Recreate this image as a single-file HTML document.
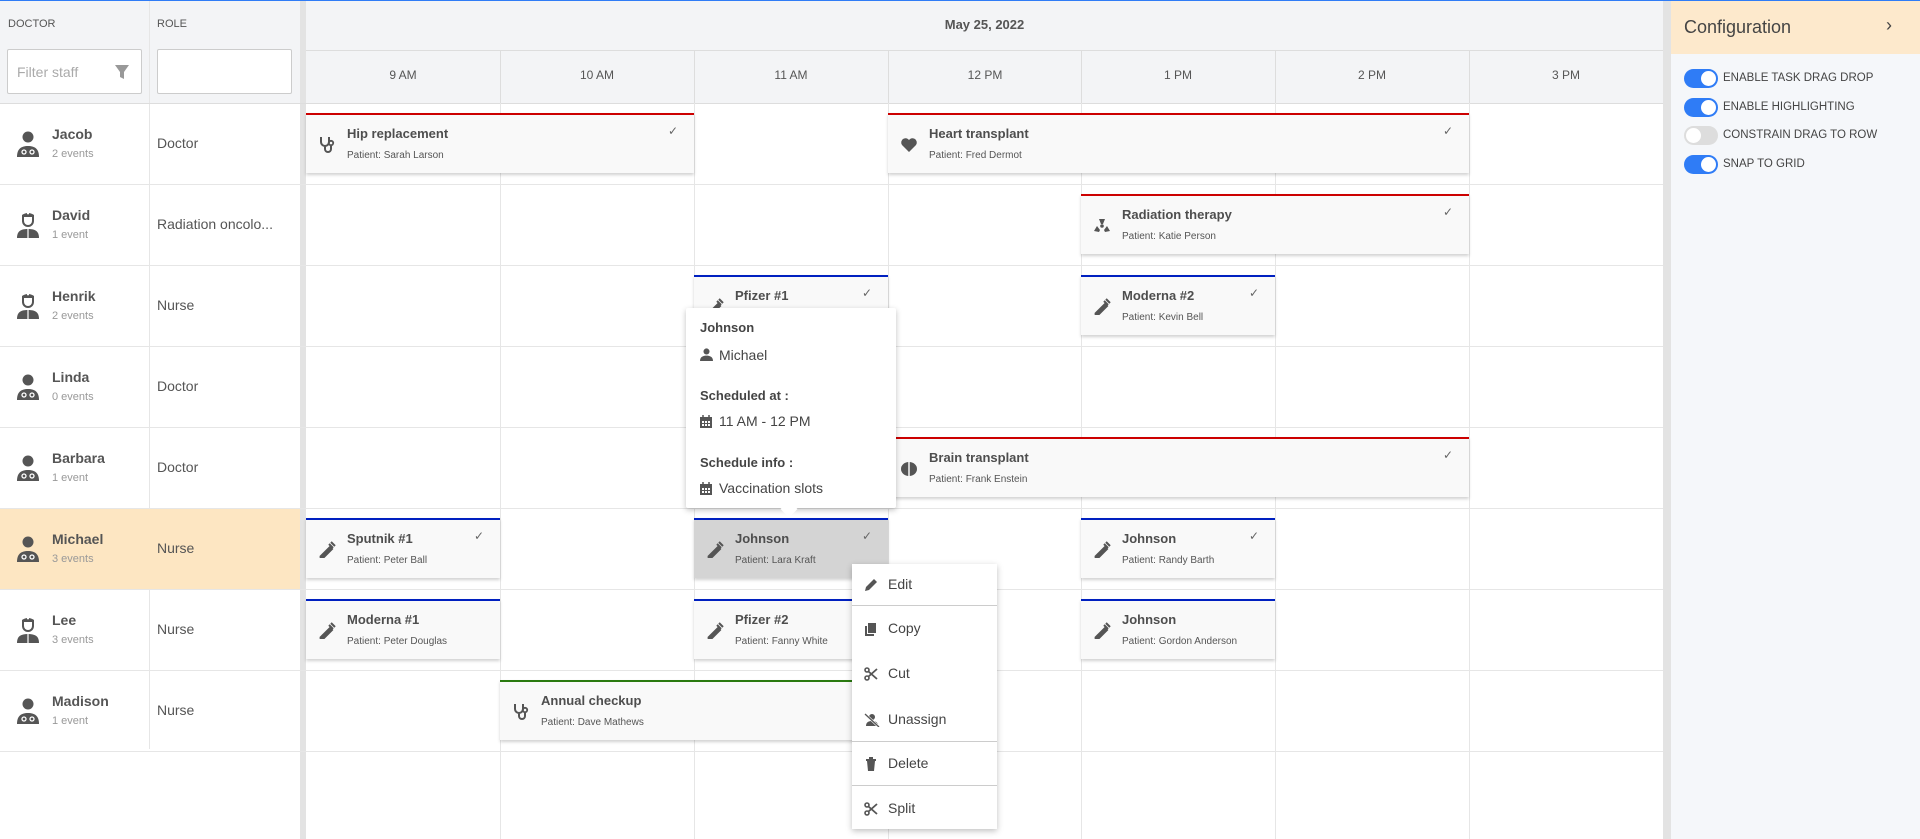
<!DOCTYPE html>
<html><head><meta charset="utf-8"><style>
*{box-sizing:border-box;margin:0;padding:0}
body{width:1920px;height:839px;overflow:hidden;background:#fff;font-family:"Liberation Sans",sans-serif;color:#4a4a4a;position:relative}
.a{position:absolute}
.hd{background:#f3f4f6}
.vl{position:absolute;width:1px;background:#e6e6e6}
.hl{position:absolute;height:1px;background:#e6e6e6}
.name{font-size:14px;font-weight:bold;color:#555}
.cnt{font-size:11px;color:#999}
.ev{position:absolute;height:60px;background:#f9f9f9;box-shadow:0 2px 3px rgba(0,0,0,.18);border-top:2px solid #c00}
.ev .t{position:absolute;left:41px;top:11px;font-size:13px;font-weight:bold;color:#4e4e4e;white-space:nowrap}
.ev .p{position:absolute;left:41px;top:35px;font-size:10px;color:#555;white-space:nowrap}
.ev .ck{position:absolute;right:16px;top:9px;font-size:12px;color:#666}
.ev svg{position:absolute;left:11px;top:20px}
.tg{position:absolute;left:1684px;width:34px;height:19px;border-radius:10px;background:#2f7cf6}
.tg::after{content:"";position:absolute;right:2px;top:2px;width:15px;height:15px;border-radius:50%;background:#fff}
.tg.off{background:#ddd}.tg.off::after{right:auto;left:2px}
.tl{position:absolute;left:1723px;font-size:11.5px;color:#444}
.mi{position:absolute;left:0;width:145px;font-size:14px;color:#444}
.mi svg{position:absolute;left:12px;top:2px}
.mi span{position:absolute;left:36px;top:0}
</style></head><body>
<div class="a" style="left:0;top:0;width:1920px;height:1px;background:#2f7cf6"></div>
<div class="a hd" style="left:0;top:1px;width:300px;height:102px"></div>
<div class="a" style="left:8px;top:18px;font-size:11px;color:#555">DOCTOR</div>
<div class="a" style="left:157px;top:18px;font-size:11px;color:#555">ROLE</div>
<div class="a" style="left:7px;top:49px;width:135px;height:45px;background:#fff;border:1px solid #ccc;border-radius:2px"></div>
<div class="a" style="left:17px;top:64px;font-size:14px;color:#aaa">Filter staff</div>
<svg class="a" style="left:114px;top:64px" width="16" height="16" viewBox="0 0 16 16"><path d="M1 1h14l-5 7v7l-4-2V8z" fill="#999"/></svg>
<div class="a" style="left:157px;top:49px;width:135px;height:45px;background:#fff;border:1px solid #ccc;border-radius:2px"></div>
<div class="vl" style="left:149px;top:1px;height:748px"></div>
<div class="a" style="left:300px;top:1px;width:6px;height:838px;background:#e3e3e3"></div>
<div class="a hd" style="left:306px;top:1px;width:1357px;height:102px"></div>
<div class="a" style="left:306px;top:17px;width:1357px;text-align:center;font-size:13px;font-weight:bold;color:#555">May 25, 2022</div>
<div class="hl" style="left:306px;top:50px;width:1357px;background:#ddd"></div>
<div class="hl" style="left:0;top:103px;width:1663px;background:#ddd"></div>
<div id="times"></div>
<div class="a" style="left:0;top:508px;width:300px;height:81px;background:#fde6c2"></div>
<div id="rows"></div>
<div class="a" style="left:1663px;top:1px;width:8px;height:838px;background:#e3e3e3"></div>
<div class="a" style="left:1671px;top:1px;width:249px;height:838px;background:#f5f7fa"></div>
<div class="a" style="left:1671px;top:1px;width:249px;height:53px;background:#fde9cc"></div>
<div class="a" style="left:1684px;top:17px;font-size:18px;color:#444">Configuration</div>
<div class="a" style="left:1886px;top:15px;font-size:18px;color:#444">›</div>
<div class="tg" style="top:69px"></div><div class="tl" style="top:72px">ENABLE TASK DRAG DROP</div>
<div class="tg" style="top:98px"></div><div class="tl" style="top:101px">ENABLE HIGHLIGHTING</div>
<div class="tg off" style="top:126px"></div><div class="tl" style="top:129px">CONSTRAIN DRAG TO ROW</div>
<div class="tg" style="top:155px"></div><div class="tl" style="top:158px">SNAP TO GRID</div>
<div id="evs"></div>
<div class="a" style="left:686px;top:308px;width:210px;height:200px;background:#fff;box-shadow:0 2px 6px rgba(0,0,0,.25);border-radius:2px"></div>
<div class="a" style="left:783px;top:503px;width:12px;height:12px;background:#fff;transform:rotate(45deg)"></div>
<div class="a" style="left:700px;top:320px;font-size:13px;font-weight:bold;color:#444">Johnson</div>
<svg class="a" style="left:700px;top:348px" width="13" height="13" viewBox="0 0 12 12"><circle cx="6" cy="3.2" r="2.8" fill="#555"/><path d="M0 12c0-4 3-5 6-5s6 1 6 5z" fill="#555"/></svg>
<div class="a" style="left:719px;top:347px;font-size:14px;color:#444">Michael</div>
<div class="a" style="left:700px;top:388px;font-size:13px;font-weight:bold;color:#444">Scheduled at :</div>
<svg class="a" style="left:700px;top:415px" width="12" height="13" viewBox="0 0 12 13"><path d="M0 2h12v11H0z" fill="#555"/><path d="M2 6h2v2H2zM5 6h2v2H5zM8 6h2v2H8zM2 9h2v2H2zM5 9h2v2H5zM8 9h2v2H8z" fill="#fff"/><path d="M3 0v3M9 0v3" stroke="#555" stroke-width="1.5"/></svg>
<div class="a" style="left:719px;top:413px;font-size:14px;color:#444">11 AM - 12 PM</div>
<div class="a" style="left:700px;top:455px;font-size:13px;font-weight:bold;color:#444">Schedule info :</div>
<svg class="a" style="left:700px;top:482px" width="12" height="13" viewBox="0 0 12 13"><path d="M0 2h12v11H0z" fill="#555"/><path d="M2 6h2v2H2zM5 6h2v2H5zM8 6h2v2H8zM2 9h2v2H2zM5 9h2v2H5zM8 9h2v2H8z" fill="#fff"/><path d="M3 0v3M9 0v3" stroke="#555" stroke-width="1.5"/></svg>
<div class="a" style="left:719px;top:480px;font-size:14px;color:#444">Vaccination slots</div>
<div class="a" style="left:852px;top:564px;width:145px;height:265px;background:#fff;box-shadow:0 2px 6px rgba(0,0,0,.25)">
<div class="mi" style="top:12px"><svg width="14" height="14" viewBox="0 0 14 14"><path d="M1 13l1-4 8-8 3 3-8 8z" fill="#555"/></svg><span>Edit</span></div>
<div class="hl" style="left:0;top:41px;width:145px;background:#ccc"></div>
<div class="mi" style="top:56px"><svg width="14" height="14" viewBox="0 0 14 14"><path d="M4 1h8v10H4z" fill="#555"/><path d="M1 4h2v8h7v2H1z" fill="#555"/></svg><span>Copy</span></div>
<div class="mi" style="top:101px"><svg width="14" height="14" viewBox="0 0 14 14"><circle cx="3" cy="3" r="2" fill="none" stroke="#555" stroke-width="1.6"/><circle cx="3" cy="11" r="2" fill="none" stroke="#555" stroke-width="1.6"/><path d="M4.5 4.5L13 12M4.5 9.5L13 2" stroke="#555" stroke-width="1.8"/></svg><span>Cut</span></div>
<div class="mi" style="top:147px"><svg width="16" height="14" viewBox="0 0 16 14"><circle cx="8" cy="4" r="3" fill="#555"/><path d="M2 13c0-4 3-5 6-5s6 1 6 5z" fill="#555"/><path d="M1 1l14 13" stroke="#fff" stroke-width="2.5"/><path d="M1 1l14 13" stroke="#555" stroke-width="1.3"/></svg><span>Unassign</span></div>
<div class="hl" style="left:0;top:177px;width:145px;background:#ccc"></div>
<div class="mi" style="top:191px"><svg width="14" height="14" viewBox="0 0 14 14"><path d="M2 2h10v2H2zM5 0h4v2H5zM3 4h8l-1 10H4z" fill="#555"/></svg><span>Delete</span></div>
<div class="hl" style="left:0;top:221px;width:145px;background:#ccc"></div>
<div class="mi" style="top:236px"><svg width="14" height="14" viewBox="0 0 14 14"><circle cx="3" cy="3" r="2" fill="none" stroke="#555" stroke-width="1.6"/><circle cx="3" cy="11" r="2" fill="none" stroke="#555" stroke-width="1.6"/><path d="M4.5 4.5L13 12M4.5 9.5L13 2" stroke="#555" stroke-width="1.8"/></svg><span>Split</span></div>
</div>
<script>
var cx=[306,500,694,888,1081,1275,1469,1663],labels=["9 AM","10 AM","11 AM","12 PM","1 PM","2 PM","3 PM"];
var h="";
for(var i=0;i<7;i++){h+='<div class="a" style="left:'+cx[i]+'px;top:68px;width:194px;text-align:center;font-size:12px;color:#555">'+labels[i]+'</div>';
 if(i>0)h+='<div class="vl" style="left:'+cx[i]+'px;top:50px;height:53px;background:#ddd"></div>';}
document.getElementById("times").innerHTML=h;
var docI='<svg width="24" height="26" viewBox="0 0 24 26"><circle cx="12" cy="6" r="5.5" fill="#555"/><path d="M1 26c0-8 4-11 11-11s11 3 11 11z" fill="#555"/><circle cx="8" cy="21" r="2" fill="none" stroke="#fff" stroke-width="1.3"/><circle cx="16" cy="21" r="2" fill="none" stroke="#fff" stroke-width="1.3"/></svg>';
var nurI='<svg width="24" height="26" viewBox="0 0 24 26"><path d="M6 3q6-4 12 0v6a6 6 0 0 1-12 0z" fill="#555"/><path d="M8 5h8v4a4 4 0 0 1-8 0z" fill="#fff"/><path d="M11 1.5h2M12 .5v2" stroke="#fff"/><path d="M1 26c0-7 4-9 11-9s11 2 11 9z" fill="#555"/><path d="M12 17v9" stroke="#fff" stroke-width="1.2"/></svg>';
var rows=[["Jacob","2 events","Doctor",docI],["David","1 event","Radiation oncolo...",nurI],["Henrik","2 events","Nurse",nurI],["Linda","0 events","Doctor",docI],["Barbara","1 event","Doctor",docI],["Michael","3 events","Nurse",docI],["Lee","3 events","Nurse",nurI],["Madison","1 event","Nurse",docI]];
h="";
for(var r=0;r<8;r++){var t=103+81*r;
 h+='<div class="a" style="left:16px;top:'+(t+28)+'px">'+rows[r][3]+'</div>';
 h+='<div class="a name" style="left:52px;top:'+(t+23)+'px">'+rows[r][0]+'</div>';
 h+='<div class="a cnt" style="left:52px;top:'+(t+45)+'px">'+rows[r][1]+'</div>';
 h+='<div class="a" style="left:157px;top:'+(t+32)+'px;font-size:14px;color:#555">'+rows[r][2]+'</div>';
 h+='<div class="hl" style="left:0;top:'+(t+81)+'px;width:1663px"></div>';}
for(var i=1;i<7;i++)h+='<div class="vl" style="left:'+cx[i]+'px;top:103px;height:736px"></div>';
document.getElementById("rows").innerHTML=h;
var syr='<svg width="20" height="20" viewBox="0 0 20 20"><path d="M3 17l3-3M5 15l8-8 2 2-8 8-3 0zM12 4l4 4M14 2l4 4M11 8l1 1M9 10l1 1" stroke="#555" stroke-width="2" fill="#555"/></svg>';
var ste='<svg width="20" height="20" viewBox="0 0 20 20"><path d="M4 2v5a4 4 0 0 0 8 0V2M8 11v3a3 3 0 0 0 6 0v-3" stroke="#555" stroke-width="2" fill="none"/><circle cx="14" cy="8" r="2.2" fill="none" stroke="#555" stroke-width="1.8"/></svg>';
var hrt='<svg width="20" height="20" viewBox="0 0 20 20"><path d="M10 17L3 10a4 4 0 0 1 7-5 4 4 0 0 1 7 5z" fill="#555"/></svg>';
var rad='<svg width="20" height="20" viewBox="0 0 20 20"><circle cx="10" cy="10" r="1.8" fill="#555"/><path d="M7 3h6l-2 5H9zM2 15l3-5 3 4-1 2zM18 15l-3-5-3 4 1 2z" fill="#555"/></svg>';
var brn='<svg width="20" height="20" viewBox="0 0 20 20"><ellipse cx="10" cy="10" rx="8" ry="7" fill="#555"/><path d="M10 3v14" stroke="#f9f9f9" stroke-width="1.5"/></svg>';
var ev=[[0,0,2,"Hip replacement","Sarah Larson","#c00",ste,1],[0,3,6,"Heart transplant","Fred Dermot","#c00",hrt,1],
[1,4,6,"Radiation therapy","Katie Person","#c00",rad,1],[2,2,3,"Pfizer #1","","#0020c0",syr,1],[2,4,5,"Moderna #2","Kevin Bell","#0020c0",syr,1],
[4,3,6,"Brain transplant","Frank Enstein","#c00",brn,1],[5,0,1,"Sputnik #1","Peter Ball","#0020c0",syr,1],[5,2,3,"Johnson","Lara Kraft","#0020c0",syr,2],
[5,4,5,"Johnson","Randy Barth","#0020c0",syr,1],[6,0,1,"Moderna #1","Peter Douglas","#0020c0",syr,0],[6,2,3,"Pfizer #2","Fanny White","#0020c0",syr,0],
[6,4,5,"Johnson","Gordon Anderson","#0020c0",syr,0],[7,1,3,"Annual checkup","Dave Mathews","#2a7a10",ste,0]];
h="";
ev.forEach(function(e){var t=103+81*e[0]+10,l=cx[e[1]],w=cx[e[2]]-l;
 h+='<div class="ev" style="left:'+l+'px;top:'+t+'px;width:'+w+'px;border-top-color:'+e[5]+(e[7]==2?';background:#d4d4d4':'')+'">'+e[6]+'<div class="t">'+e[3]+'</div>'+(e[4]?'<div class="p">Patient: '+e[4]+'</div>':'')+(e[7]?'<div class="ck">✓</div>':'')+'</div>';});
document.getElementById("evs").innerHTML=h;
</script>
</body></html>
